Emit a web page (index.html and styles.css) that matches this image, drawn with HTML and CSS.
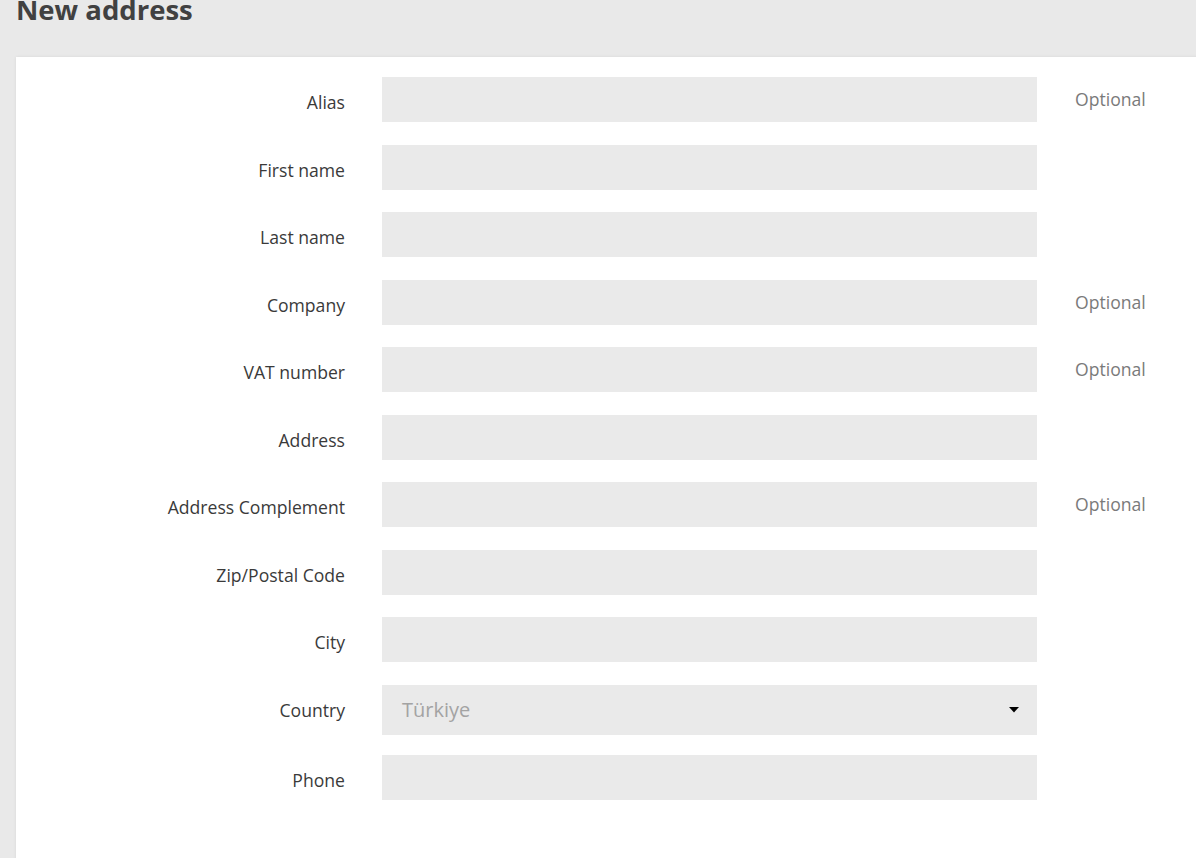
FILE: index.html
```html
<!DOCTYPE html>
<html lang="en">
<head>
<meta charset="utf-8">
<title>New address</title>
<link rel="stylesheet" href="styles.css">
</head>
<body>
<main class="page">
  <h1 class="page-title">New address</h1>
  <section class="card">
    <form class="address-form">
      <div class="form-row">
        <label class="form-label">Alias</label>
        <input class="form-input" type="text">
        <span class="form-note">Optional</span>
      </div>
      <div class="form-row">
        <label class="form-label">First name</label>
        <input class="form-input" type="text">
        <span class="form-note"></span>
      </div>
      <div class="form-row">
        <label class="form-label">Last name</label>
        <input class="form-input" type="text">
        <span class="form-note"></span>
      </div>
      <div class="form-row">
        <label class="form-label">Company</label>
        <input class="form-input" type="text">
        <span class="form-note">Optional</span>
      </div>
      <div class="form-row">
        <label class="form-label">VAT number</label>
        <input class="form-input" type="text">
        <span class="form-note">Optional</span>
      </div>
      <div class="form-row">
        <label class="form-label">Address</label>
        <input class="form-input" type="text">
        <span class="form-note"></span>
      </div>
      <div class="form-row">
        <label class="form-label">Address Complement</label>
        <input class="form-input" type="text">
        <span class="form-note">Optional</span>
      </div>
      <div class="form-row">
        <label class="form-label">Zip/Postal Code</label>
        <input class="form-input" type="text">
        <span class="form-note"></span>
      </div>
      <div class="form-row">
        <label class="form-label">City</label>
        <input class="form-input" type="text">
        <span class="form-note"></span>
      </div>
      <div class="form-row form-row-select">
        <label class="form-label">Country</label>
        <div class="select-box">
          <span class="select-value">Türkiye</span>
          <svg class="select-caret" width="10" height="6" viewBox="0 0 10 6"><path d="M0 0H10L5 5.5Z" fill="#000"/></svg>
        </div>
        <span class="form-note"></span>
      </div>
      <div class="form-row">
        <label class="form-label">Phone</label>
        <input class="form-input" type="text">
        <span class="form-note"></span>
      </div>
    </form>
  </section>
</main>
</body>
</html>
```

FILE: styles.css
```css
html {
  overflow: hidden;
}
body {
  margin: 0;
  background: #e9e9e9;
  font-family: "Open Sans", "Noto Sans", sans-serif;
  color: #3c3c3c;
}
.page {
  padding-left: 16px;
}
.page-title {
  margin: -5px 0 0 0;
  font-size: 27.5px;
  line-height: 30px;
  font-weight: 700;
  color: #414141;
  height: 62px;
  box-sizing: border-box;
}
.card {
  background: #fff;
  margin-right: -20px;
  padding: 20px 0 60px 0;
  box-shadow: 0 0 3px rgba(0, 0, 0, 0.08);
  min-height: 760px;
}
.address-form {
  display: flex;
  flex-direction: column;
}
.form-row {
  display: grid;
  grid-template-columns: 329px 655px 1fr;
  column-gap: 37px;
  margin-bottom: 22.5px;
  height: 45px;
}
.form-row-select {
  height: 50px;
  margin-bottom: 20px;
}
.form-label {
  text-align: right;
  font-size: 17.6px;
  line-height: 24px;
  padding-top: 13px;
  color: #3a3a3a;
}
.form-input {
  border: none;
  background: #eaeaea;
  height: 45px;
  width: 655px;
  margin: 0;
  padding: 0 20px;
  box-sizing: border-box;
  font-family: inherit;
  font-size: 17.6px;
  outline: none;
}
.form-note {
  font-size: 17.6px;
  line-height: 24px;
  padding-top: 10px;
  padding-left: 1px;
  color: #7a7a7a;
}
.select-box {
  position: relative;
  background: #eaeaea;
  height: 50px;
  display: flex;
  align-items: center;
  padding: 0 20px;
}
.select-value {
  font-size: 20px;
  color: #a3a3a3;
  line-height: 24px;
}
.select-caret {
  position: absolute;
  right: 18px;
  top: 22px;
}
```
